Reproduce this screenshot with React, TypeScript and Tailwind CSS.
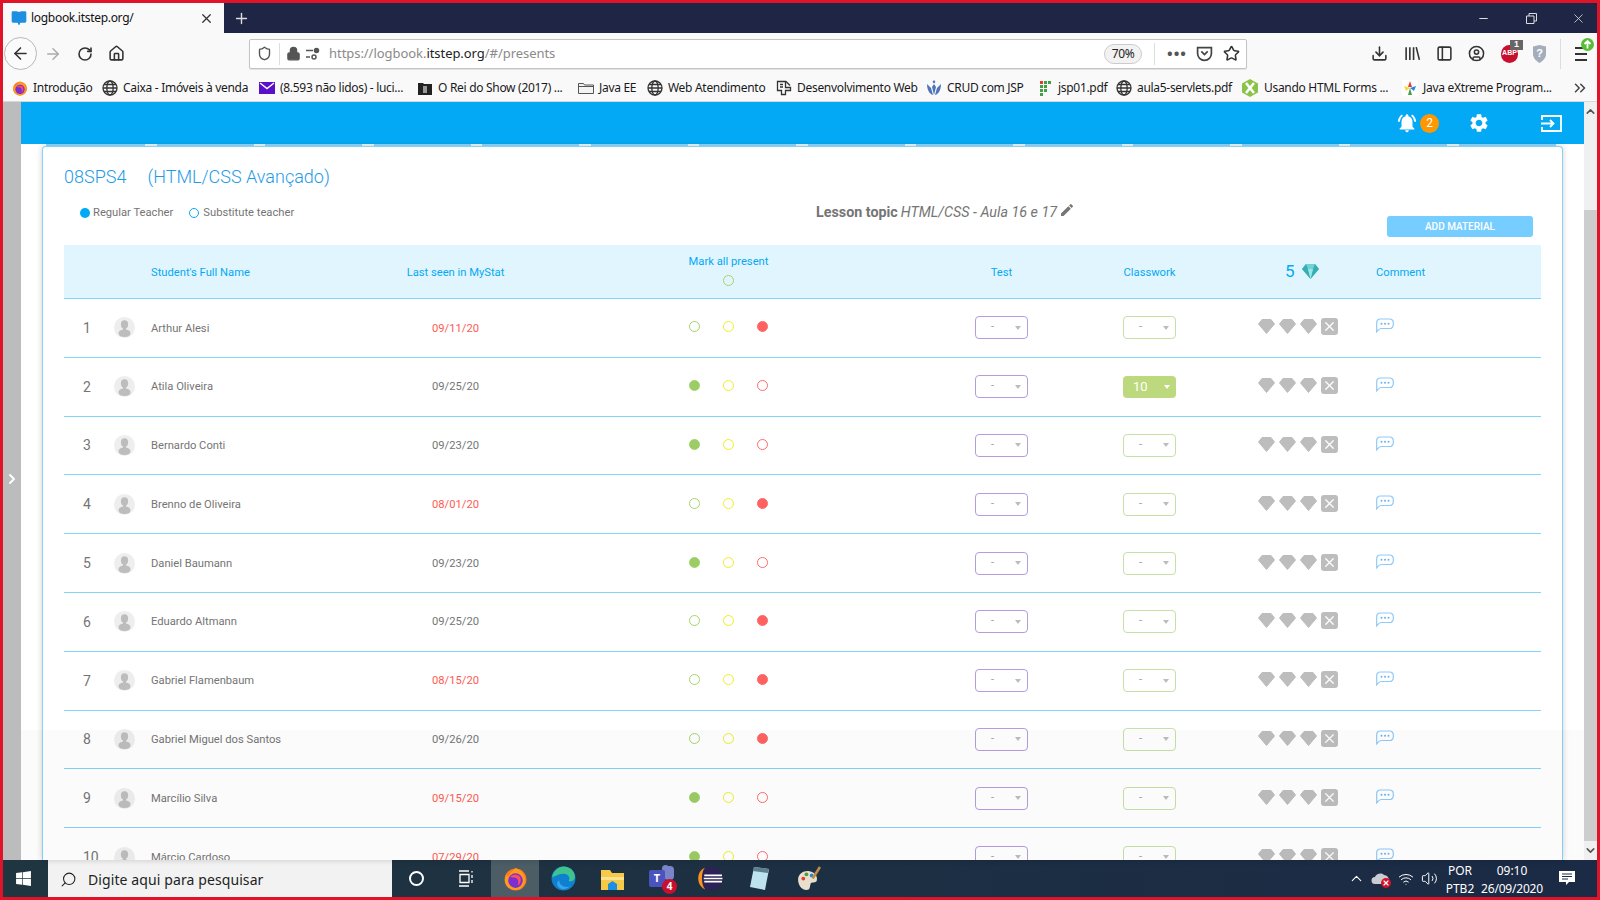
import { ArrowLeft, ArrowRight, BookOpen, ChevronDown, ChevronRight, ChevronUp, ChevronsRight, CircleUser, Download, Home, Lock, Minus, PanelLeft, Plus, RotateCw, Search, Shield, Star, Volume2, Wifi, X } from 'lucide-react'
import { MdEdit, MdNotificationsActive, MdSettings } from 'react-icons/md'
import { FaWindows } from 'react-icons/fa'

const grid = 'grid grid-cols-[46px_41px_230px_149px_397px_149px_147px_153px_1fr] items-center'

const students = [
  { name: 'Arthur Alesi', seen: '09/11/20', late: true, mark: 'red' },
  { name: 'Atila Oliveira', seen: '09/25/20', late: false, mark: 'green', classwork: '10' },
  { name: 'Bernardo Conti', seen: '09/23/20', late: false, mark: 'green' },
  { name: 'Brenno de Oliveira', seen: '08/01/20', late: true, mark: 'red' },
  { name: 'Daniel Baumann', seen: '09/23/20', late: false, mark: 'green' },
  { name: 'Eduardo Altmann', seen: '09/25/20', late: false, mark: 'red' },
  { name: 'Gabriel Flamenbaum', seen: '08/15/20', late: true, mark: 'red' },
  { name: 'Gabriel Miguel dos Santos', seen: '09/26/20', late: false, mark: 'red' },
  { name: 'Marcílio Silva', seen: '09/15/20', late: true, mark: 'green' },
  { name: 'Márcio Cardoso', seen: '07/29/20', late: true, mark: 'green' },
]

function FirefoxIcon({ size = 16 }: { size?: number }) {
  return (
    <svg width={size} height={size} viewBox="0 0 24 24">
      <circle cx="12" cy="13" r="10.500" fill="#ff7a1a" />
      <path d="M12 2c4 2 7 3 9 9 1 6-3 12-9 12S2 19 1.800 14c0-2 .7-4 1.700-6 .3 1.500.8 2 1.500 2.500C6 7 9 5 12 2z" fill="#ff9a1f" />
      <circle cx="12" cy="14" r="7" fill="#7b2fd0" />
      <path d="M7 10c3-2 7-2 9 0 2 3 1 7-2 9 2-4 0-8-3-8-2 0-3 0-4-1z" fill="#ff4f5e" />
    </svg>
  )
}

function Globe() {
  return (
    <svg width="16" height="16" viewBox="0 0 16 16" fill="none" stroke="#333" strokeWidth="1.300">
      <circle cx="8" cy="8" r="7" />
      <ellipse cx="8" cy="8" rx="3.200" ry="7" />
      <path d="M1 8h14M2 4.500h12M2 11.500h12" />
    </svg>
  )
}

function BookmarkIcon({ kind }: { kind: string }) {
  if (kind === 'firefox') return <FirefoxIcon />
  if (kind === 'globe') return <Globe />
  if (kind === 'mail')
    return (
      <svg width="16" height="16" viewBox="0 0 16 16">
        <rect x="0" y="2" width="16" height="12" fill="#5a0fc8" />
        <path d="M1 3l7 5.500L15 3" fill="none" stroke="#fff" strokeWidth="1.400" />
      </svg>
    )
  if (kind === 'film')
    return (
      <svg width="16" height="16" viewBox="0 0 16 16">
        <path d="M1 3h5l1 1h8v11H1z" fill="#222" />
        <rect x="6" y="6" width="4" height="7" fill="#999" />
      </svg>
    )
  if (kind === 'folder')
    return (
      <svg width="16" height="16" viewBox="0 0 16 16" fill="#f3f3f3" stroke="#555">
        <path d="M.5 3.500h5l1 1.500h9v8.500H.5z" />
        <path d="M.5 6.500h15" />
      </svg>
    )
  if (kind === 'doc')
    return (
      <svg width="16" height="16" viewBox="0 0 16 16" fill="none" stroke="#333" strokeWidth="1.300">
        <path d="M1.500 1.500h8v6h5v3h-5v4h-4v-4h-4z" />
        <path d="M4 4.500h3M4 7h3M10 1.500l4 4" />
      </svg>
    )
  if (kind === 'crud')
    return (
      <svg width="16" height="16" viewBox="0 0 16 16" fill="#4f74b8">
        <path d="M8 4l2 3-2 8-2-8zM1 4l4 4 2 7C3 14 1 9 1 4zM15 4l-4 4-2 7c4-1 6-6 6-11zM8 0l1.500 2L8 3.500 6.500 2z" />
      </svg>
    )
  if (kind === 'jsp')
    return (
      <svg width="16" height="16" viewBox="0 0 16 16" fill="#43a047">
        <rect x="3" y="1" width="3" height="3" fill="#e53935" />
        <rect x="7" y="1" width="3" height="3" />
        <rect x="11" y="1" width="3" height="3" />
        <rect x="3" y="5" width="3" height="3" />
        <rect x="7" y="5" width="3" height="3" />
        <rect x="3" y="9" width="3" height="3" />
        <rect x="7" y="9" width="3" height="3" />
        <rect x="3" y="13" width="3" height="3" />
      </svg>
    )
  if (kind === 'forms')
    return (
      <svg width="18" height="18" viewBox="0 0 18 18">
        <path d="M9 0l8 4.500v9L9 18l-8-4.500v-9z" fill="#8bc34a" />
        <path d="M5 4l8 10M13 4L5 14" stroke="#fff" strokeWidth="2.500" />
      </svg>
    )
  return (
    <svg width="16" height="16" viewBox="0 0 16 16">
      <rect width="16" height="16" fill="#fff" />
      <path d="M8 1l2 6H6z" fill="#e53935" />
      <path d="M2 6l6 2-4 3z" fill="#fdd835" />
      <path d="M14 6L8 8l4 3z" fill="#1e88e5" />
      <path d="M8 8l2 7H6z" fill="#43a047" />
    </svg>
  )
}

const bookmarks = [
  { icon: 'firefox', label: 'Introdução', text: 'w-[57px]' },
  { icon: 'globe', label: 'Caixa - Imóveis à venda', text: 'w-[124px]' },
  { icon: 'mail', label: '(8.593 não lidos) - luci...', text: 'w-[125px]' },
  { icon: 'film', label: 'O Rei do Show (2017) ...', text: 'w-[128px]' },
  { icon: 'folder', label: 'Java EE', text: 'w-[36px]' },
  { icon: 'globe', label: 'Web Atendimento', text: 'w-[96px]' },
  { icon: 'doc', label: 'Desenvolvimento Web', text: 'w-[117px]' },
  { icon: 'crud', label: 'CRUD com JSP', text: 'w-[78px]' },
  { icon: 'jsp', label: 'jsp01.pdf', text: 'w-[46px]' },
  { icon: 'globe', label: 'aula5-servlets.pdf', text: 'w-[92px]' },
  { icon: 'forms', label: 'Usando HTML Forms ...', text: 'w-[126px]' },
  { icon: 'star', label: 'Java eXtreme Program...', text: 'w-[127px]' },
]

function TabBar() {
  return (
    <div className="flex h-[30px] shrink-0 items-stretch bg-[#1f2544] text-white">
      <div className="flex w-[221px] items-center bg-[#f9f9fa] pl-[8px] pr-[10px] text-[#111]">
        <BookOpen className="h-[16px] w-[16px] fill-[#1d8fe0] text-[#1d8fe0]" />
        <span className="ml-[4px] flex-1 text-[12px] tracking-[-0.3px]">logbook.itstep.org/</span>
        <X className="h-[15px] w-[15px] text-[#333]" />
      </div>
      <Plus className="ml-[9px] h-[17px] w-[17px] self-center text-[#ddd]" />
      <div className="ml-auto flex items-center text-[#ddd]">
        <Minus className="mr-[36px] h-[13px] w-[13px]" />
        <svg className="mr-[34px]" width="11" height="11" viewBox="0 0 11 11" fill="none" stroke="#ddd">
          <path d="M.5 3h7.500v7.500H.5zM3 3V.5h7.500V8H8" />
        </svg>
        <X className="mr-[11px] h-[15px] w-[15px]" strokeWidth={1.300} />
      </div>
    </div>
  )
}

function Toolbar() {
  return (
    <div className="flex h-[37px] shrink-0 items-center bg-[#f9f9fa] pt-[4px] text-[#333]">
      <div className="ml-px flex h-[33px] w-[33px] items-center justify-center rounded-full border border-[#b8b8b8] bg-[#fbfbfb]">
        <ArrowLeft className="h-[19px] w-[19px]" />
      </div>
      <ArrowRight className="ml-[7px] h-[18px] w-[18px] text-[#aaa]" />
      <RotateCw className="ml-[15px] h-[16px] w-[16px]" strokeWidth={2.400} />
      <Home className="ml-[15px] h-[17px] w-[17px]" strokeWidth={2.200} />
      <div className="ml-[124px] flex h-[30px] w-[998px] items-center rounded-[2px] border border-[#c4c4c4] bg-white shadow-[0_1px_1px_rgba(0,0,0,0.1)]">
        <Shield className="ml-[7px] h-[15px] w-[15px] text-[#555]" strokeWidth={2.200} />
        <div className="ml-[7px] h-[22px] w-px bg-[#ddd]" />
        <Lock className="ml-[6px] h-[15px] w-[15px] fill-[#555] text-[#555]" />
        <svg className="ml-[5px]" width="14" height="14" viewBox="0 0 14 14" fill="none" stroke="#555" strokeWidth="1.500">
          <path d="M0 3.500h7M0 10h4" />
          <circle cx="10.500" cy="3.500" r="2" fill="#555" />
          <circle cx="8" cy="10" r="2" />
        </svg>
        <span className="ml-[9px] text-[13px] tracking-[-0.05px] text-[#8a8a8a]">
          https://logbook.<span className="text-[#222]">itstep.org</span>/#/presents
        </span>
        <span className="ml-auto flex h-[20px] w-[38px] items-center justify-center rounded-full border border-[#ccc] bg-[#f2f2f2] text-[12px] tracking-[-0.3px] text-[#222]">70%</span>
        <div className="ml-[12px] h-[22px] w-px bg-[#ddd]" />
        <span className="ml-[12px] text-[15px] font-bold leading-none tracking-[1px] text-[#555]">•••</span>
        <svg className="ml-[9px]" width="17" height="17" viewBox="0 0 16 16" fill="none" stroke="#444" strokeWidth="1.600">
          <path d="M1.500 2.500h13v5.500a6.500 6.500 0 0 1-13 0z" />
          <path d="M5 6l3 3 3-3" />
        </svg>
        <Star className="ml-[10px] mr-[6px] h-[17px] w-[17px]" strokeWidth={2.200} />
      </div>
      <Download className="ml-[124px] h-[17px] w-[17px]" strokeWidth={2.200} />
      <svg className="ml-[16px]" width="17" height="17" viewBox="0 0 16 16" fill="none" stroke="#333" strokeWidth="1.500">
        <path d="M2 2v12M5.500 2v12M9 2v12M11.500 2l3 12" />
      </svg>
      <PanelLeft className="ml-[15px] h-[17px] w-[17px]" strokeWidth={2.200} />
      <CircleUser className="ml-[15px] h-[17px] w-[17px]" strokeWidth={2.200} />
      <div className="relative ml-[16px] flex h-[18px] w-[17px] items-center justify-center rounded-full bg-[#c8102e]">
        <span className="font-['Liberation_Sans',sans-serif] text-[7px] font-bold text-white">ABP</span>
        <span className="absolute -right-[5px] -top-[5px] flex h-[10px] w-[13px] items-center justify-center bg-[#666] font-['Liberation_Sans',sans-serif] text-[9px] font-bold text-white">1</span>
      </div>
      <svg className="ml-[14px]" width="15" height="20" viewBox="0 0 15 20">
        <path d="M1 2.500L7.500 1 14 2.500V10c0 4-3 7-6.500 9C4 17 1 14 1 10z" fill="#a5adbb" />
        <text x="7.500" y="13" fontSize="11" fontWeight="700" fill="#fff" textAnchor="middle" fontFamily="Liberation Sans">?</text>
      </svg>
      <div className="ml-[13px] h-[30px] w-px bg-[#ddd]" />
      <div className="relative ml-[14px]">
        <div className="flex w-[12px] flex-col gap-[4px]">
          <div className="h-[2px] bg-[#333]" />
          <div className="h-[2px] bg-[#333]" />
          <div className="h-[2px] bg-[#333]" />
        </div>
        <svg className="absolute -right-[7px] -top-[9px]" width="13" height="13" viewBox="0 0 13 13">
          <circle cx="6.500" cy="6.500" r="6.500" fill="#57bd35" />
          <path d="M6.500 10.500V3M3.500 6l3-3 3 3" fill="none" stroke="#fff" strokeWidth="1.800" />
        </svg>
      </div>
    </div>
  )
}

function Bookmarks() {
  return (
    <div className="flex h-[32px] shrink-0 items-center border-b border-[#d8d8d8] bg-[#f9f9fa] pl-[9px] pt-[4px] text-[12px] text-[#1a1a1a]">
      <div className="flex items-center gap-[12px]">
        {bookmarks.map((b, i) => (
          <div key={i} className="flex items-center gap-[5px]">
            <BookmarkIcon kind={b.icon} />
            <span className={`${b.text} whitespace-nowrap tracking-[-0.3px]`}>{b.label}</span>
          </div>
        ))}
      </div>
      <ChevronsRight className="ml-[21px] h-[18px] w-[18px] text-[#444]" />
    </div>
  )
}

function Dot({ tone, filled }: { tone: 'green' | 'yellow' | 'red'; filled?: boolean }) {
  if (tone === 'green')
    return <span className={`h-[11px] w-[11px] rounded-full border border-[#a5d46a] ${filled ? 'bg-[#9ccc65]' : ''}`} />
  if (tone === 'yellow') return <span className="h-[11px] w-[11px] rounded-full border border-[#f0f020]" />
  return <span className={`h-[11px] w-[11px] rounded-full border border-[#ff6b6b] ${filled ? 'bg-[#ff6161]' : ''}`} />
}

function Caret({ light }: { light?: boolean }) {
  return <span className={`h-0 w-0 border-x-[3.500px] border-t-[4px] border-x-transparent ${light ? 'border-t-white' : 'border-t-[#bdbdbd]'}`} />
}

function Gem() {
  return (
    <svg width="17" height="15" viewBox="0 0 17 15" className="shrink-0">
      <path d="M4 .500h9l3.500 4.500-8 9.500-8-9.500z" fill="#bdbdbd" stroke="#bdbdbd" strokeLinejoin="round" />
    </svg>
  )
}

function Avatar() {
  return (
    <svg width="21" height="21" viewBox="0 0 21 21" className="ml-[4px]">
      <circle cx="10.500" cy="10.500" r="10.500" fill="#eeeeee" />
      <ellipse cx="10.500" cy="7.500" rx="3.600" ry="4.200" fill="#bdbdbd" />
      <path d="M9 11h3v1.500c2.500.8 4.500 1.600 4.500 3.500 0 2.500-2 4-6 4s-6-1.500-6-4c0-1.900 2-2.700 4.500-3.500z" fill="#bdbdbd" />
    </svg>
  )
}

function CommentIcon() {
  return (
    <svg width="18" height="15" viewBox="0 0 18 15" fill="none">
      <path d="M.700 13.800V4.500A3.500 3.500 0 0 1 4.200 1h9.600a3.500 3.500 0 0 1 3.500 3.500v2.500a3.500 3.500 0 0 1-3.500 3.500H5C3.200 10.500 2 12 .700 13.800z" stroke="#90caf9" strokeWidth="1.200" />
      <circle cx="5.500" cy="5.800" r="1" fill="#64b5f6" />
      <circle cx="9" cy="5.800" r="1" fill="#64b5f6" />
      <circle cx="12.500" cy="5.800" r="1" fill="#64b5f6" />
    </svg>
  )
}

function StudentRow({ index, student }: { index: number; student: (typeof students)[number] }) {
  return (
    <div className={`${grid} h-[58.800px] shrink-0 border-b border-[#81d4fa] text-[11.200px] text-[#757575]`}>
      <span className="pl-[19px] text-[14px] leading-none">{index}</span>
      <Avatar />
      <span className="pt-[2px]">{student.name}</span>
      <span className={`pt-[2px] text-center ${student.late ? 'text-[#ff5a52]' : ''}`}>{student.seen}</span>
      <div className="flex justify-center gap-[23px] pb-[2px]">
        <Dot tone="green" filled={student.mark === 'green'} />
        <Dot tone="yellow" />
        <Dot tone="red" filled={student.mark === 'red'} />
      </div>
      <div className="flex justify-center">
        <div className="flex h-[23px] w-[53px] items-center justify-between rounded-[4px] border border-[#b39ddb] pl-[15px] pr-[6px] text-[#9e9e9e]">
          <span>-</span>
          <Caret />
        </div>
      </div>
      <div className="flex justify-center">
        {student.classwork ? (
          <div className="flex h-[22px] w-[53px] items-center justify-between rounded-[4px] bg-[#bdd97e] pl-[10px] pr-[6px] text-[13px] text-white">
            <span>{student.classwork}</span>
            <Caret light />
          </div>
        ) : (
          <div className="flex h-[23px] w-[53px] items-center justify-between rounded-[4px] border border-[#c5e1a5] pl-[15px] pr-[6px] text-[#9e9e9e]">
            <span>-</span>
            <Caret />
          </div>
        )}
      </div>
      <div className="flex items-center gap-[4px] pb-[2px] pl-[35px]">
        <Gem />
        <Gem />
        <Gem />
        <div className="flex h-[17px] w-[17px] items-center justify-center rounded-[3px] bg-[#bdbdbd]">
          <X className="h-[15px] w-[15px] text-white" strokeWidth={2} />
        </div>
      </div>
      <div className="flex pb-[4px]">
        <CommentIcon />
      </div>
    </div>
  )
}

function Journal() {
  return (
    <div className="mx-[21px] flex min-h-0 flex-1 flex-col overflow-hidden rounded-t-[4px] border-x border-t border-[#81d4fa] bg-white px-[21px] shadow-[0_0_6px_rgba(0,0,0,0.18)]">
      <div className="flex h-[52px] shrink-0 items-end pb-[13px] text-[18px] font-light leading-none text-[#1e9be8]">
        <span>08SPS4</span>
        <span className="ml-[21px]">(HTML/CSS Avançado)</span>
      </div>
      <div className="flex h-[46px] shrink-0 items-start text-[#757575]">
        <div className="flex w-[752px] items-center pl-[16px] pt-[6px] text-[11.200px]">
          <span className="h-[10px] w-[10px] rounded-full bg-[#03a9f4]" />
          <span className="ml-[3px]">Regular Teacher</span>
          <span className="ml-[16px] h-[10px] w-[10px] rounded-full border border-[#03a9f4]" />
          <span className="ml-[4px]">Substitute teacher</span>
        </div>
        <div className="flex w-[571px] items-center pt-[3px] text-[14.300px]">
          <span className="font-bold">Lesson topic</span>
          <span className="ml-[3px] italic">HTML/CSS - Aula 16 e 17</span>
          <MdEdit className="mb-[5px] ml-[2px] h-[16px] w-[16px]" />
        </div>
        <button className="mt-[17px] h-[21px] w-[146px] rounded-[3px] bg-[#76cdff] text-[10px] font-medium text-white">ADD MATERIAL</button>
      </div>
      <div className={`${grid} h-[54px] shrink-0 border-b border-[#81d4fa] bg-[#e1f5fe] text-[11.200px] text-[#03a9f4]`}>
        <span />
        <span />
        <span className="pt-[3px]">Student's Full Name</span>
        <span className="pt-[3px] text-center">Last seen in MyStat</span>
        <div className="flex flex-col items-center gap-[5px] pb-[3px]">
          <span>Mark all present</span>
          <Dot tone="green" />
        </div>
        <span className="pt-[3px] text-center">Test</span>
        <span className="pt-[3px] text-center">Classwork</span>
        <div className="flex items-center pl-[62px]">
          <span className="text-[17px] leading-none">5</span>
          <svg className="ml-[7px]" width="17" height="15" viewBox="0 0 17 15">
            <path d="M4 0h9l4 5-8.500 10L0 5z" fill="#6fd3d3" />
            <path d="M4 0l2 5 2.500 10L0 5zM13 0l-2 5-2.500 10L17 5z" fill="#37aeb4" />
            <path d="M6 5h5L8.500 15z" fill="#9be6e6" />
          </svg>
        </div>
        <span className="pt-[3px]">Comment</span>
      </div>
      {students.map((s, i) => (
        <StudentRow key={s.name} index={i + 1} student={s} />
      ))}
    </div>
  )
}

function Page() {
  return (
    <div className="relative flex min-h-0 flex-1 font-['Roboto',sans-serif]">
      <div className="flex w-[18px] shrink-0 items-center justify-center bg-[#bcbcbc] pb-[4px]">
        <ChevronRight className="h-[16px] w-[16px] text-white" strokeWidth={3} />
      </div>
      <div className="flex min-w-0 flex-1 flex-col bg-white">
        <div className="flex h-[42px] shrink-0 items-center bg-[#04a9f5] text-white">
          <MdNotificationsActive className="ml-[1375px] h-[22px] w-[22px]" />
          <span className="ml-[2px] flex h-[19px] w-[19px] items-center justify-center rounded-full bg-[#ff9800] text-[12px]">2</span>
          <MdSettings className="ml-[29px] h-[22px] w-[22px]" />
          <svg className="ml-[51px]" width="21" height="17" viewBox="0 0 21 17" fill="none" stroke="#fff" strokeWidth="1.800">
            <path d="M1 5V1h19v15H1v-4" />
            <path d="M0 8.500h12M9 5l3.500 3.500L9 12" />
          </svg>
        </div>
        <div className="ml-[25px] mr-[27px] flex h-[2px] shrink-0 gap-[97px] overflow-hidden bg-[#90d8ff] pl-[99px]">
          {Array.from({ length: 14 }).map((_, i) => (
            <span key={i} className="h-[2px] w-[11.500px] shrink-0 bg-[#eef9ff]" />
          ))}
        </div>
        <Journal />
      </div>
      <div className="flex w-[13px] shrink-0 flex-col items-center justify-between bg-[#f0f0f0]">
        <ChevronUp className="mt-[3px] h-[13px] w-[13px] text-[#555]" strokeWidth={3} />
        <div className="mb-[3px] mt-[92px] w-full flex-1 bg-[#cdcdcd]" />
        <ChevronDown className="mb-[3px] h-[13px] w-[13px] text-[#555]" strokeWidth={3} />
      </div>
      <div className="pointer-events-none absolute bottom-0 left-[18px] right-[13px] h-[130px] bg-black/[0.015]" />
    </div>
  )
}

function Taskbar() {
  return (
    <div className="flex h-[37px] shrink-0 items-stretch bg-gradient-to-r from-[#1f3540] to-[#1b2a45] text-white">
      <div className="flex w-[45px] items-center justify-center pr-[4px]">
        <FaWindows className="h-[17px] w-[17px]" />
      </div>
      <div className="flex w-[344px] items-center bg-[#f2f2f2] pl-[12px] pt-px text-[14px] text-[#222]">
        <Search className="h-[17px] w-[17px] -scale-x-100" strokeWidth={1.500} />
        <span className="ml-[11px] tracking-[0.1px]">Digite aqui para pesquisar</span>
      </div>
      <div className="flex w-[48px] items-center justify-center pl-[1px]">
        <span className="h-[15px] w-[15px] rounded-full border-[2.500px] border-white" />
      </div>
      <div className="flex w-[51px] items-center justify-center">
        <svg width="17" height="17" viewBox="0 0 17 17" fill="none" stroke="#fff" strokeWidth="1.300">
          <path d="M2 1h10M2 16h10M3 4.500h9v8H3zM15 1v1.500M15 5v3M15 10v3" />
        </svg>
      </div>
      <div className="flex w-[48px] items-center justify-center bg-[#4c5d66]">
        <FirefoxIcon size={25} />
      </div>
      <div className="flex w-[49px] items-center justify-center">
        <svg width="25" height="25" viewBox="0 0 24 24">
          <circle cx="12" cy="12" r="11.500" fill="#0f7fd0" />
          <path d="M1 11C2 5 7 .500 12 .500c6 0 11 4 11 10 0 3-3 5-6 4 2-4-1-7-5-7-5 0-9 3-11 3.500z" fill="#3ec28f" />
          <path d="M8 14c0 4 4 7 9 6l2-1c-3 3-9 5-12 1-2-2-1-6 1-6z" fill="#37a5e8" />
        </svg>
      </div>
      <div className="flex w-[49px] items-center justify-center">
        <svg width="23" height="22" viewBox="0 0 23 22">
          <path d="M0 2h9l2 3h12v17H0z" fill="#f7c948" />
          <rect x="0" y="9" width="23" height="3" fill="#fbe38e" />
          <path d="M7 22v-6l4.500-3 4.500 3v6z" fill="#1d8fe0" />
        </svg>
      </div>
      <div className="flex w-[49px] items-center justify-center">
        <div className="relative flex h-[25px] w-[25px] items-center justify-center">
          <span className="absolute right-0 top-0 h-[14px] w-[10px] rounded-[4px] bg-[#7b83c9]" />
          <span className="absolute right-[5px] top-[-1px] h-[7px] w-[7px] rounded-full bg-[#7b83c9]" />
          <span className="absolute left-0 top-[4px] flex h-[17px] w-[16px] items-center justify-center rounded-[2px] bg-[#4b53bc] text-[11px] font-bold">T</span>
          <span className="absolute -bottom-[3px] -right-[3px] flex h-[15px] w-[15px] items-center justify-center rounded-full bg-[#c8102e] text-[10px] font-bold">4</span>
        </div>
      </div>
      <div className="flex w-[49px] items-center justify-center">
        <svg width="25" height="25" viewBox="0 0 24 24">
          <circle cx="12" cy="12" r="11.500" fill="#2c2255" />
          <path d="M7 1.500a11.500 11.500 0 0 0 0 21C3 19 2.500 5 7 1.500z" fill="#f7941e" />
          <path d="M6 9h17M5.500 12h18M6 15h17" stroke="#fff" strokeWidth="1.500" />
        </svg>
      </div>
      <div className="flex w-[49px] items-center justify-center">
        <svg width="23" height="25" viewBox="0 0 23 25">
          <path d="M6 1l15 2-4 21-15-3z" fill="#bfe3ee" />
          <path d="M6 1l15 2-1 4-15-2z" fill="#5b7f8c" />
        </svg>
      </div>
      <div className="flex w-[49px] items-center justify-center">
        <svg width="25" height="25" viewBox="0 0 24 24">
          <path d="M2 13c0-6 6-9 11-8 5 1 8 5 7 9-1 3-5 1-6 3-1 3 0 6-4 6-5 0-8-5-8-10z" fill="#e8e0cc" />
          <circle cx="7" cy="12" r="1.800" fill="#e53935" />
          <circle cx="10" cy="8" r="1.800" fill="#43a047" />
          <circle cx="15" cy="9" r="1.800" fill="#1e88e5" />
          <path d="M23 1l-7 11" stroke="#c58b46" strokeWidth="2.500" />
        </svg>
      </div>
      <div className="ml-auto flex items-center text-[12px]">
        <ChevronUp className="h-[17px] w-[17px]" strokeWidth={1.500} />
        <div className="relative ml-[6px] flex">
          <svg width="19" height="13" viewBox="0 0 19 13">
            <path d="M4 12a3.500 3.500 0 0 1 0-7c1-3 6-5 9-2 3 0 5 3 5 5s-2 4-4 4z" fill="#c8ccd3" />
          </svg>
          <span className="absolute -bottom-[3px] -right-[1px] flex h-[10px] w-[10px] items-center justify-center rounded-full bg-[#d3122a]">
            <X className="h-[8px] w-[8px]" strokeWidth={3.500} />
          </span>
        </div>
        <Wifi className="ml-[8px] h-[16px] w-[16px]" strokeWidth={1.500} />
        <Volume2 className="ml-[7px] h-[17px] w-[17px]" strokeWidth={1.400} />
        <div className="ml-[7px] flex w-[30px] flex-col items-center pt-[2px] leading-[18px]">
          <span>POR</span>
          <span>PTB2</span>
        </div>
        <div className="ml-[4px] flex w-[66px] flex-col items-center pt-[2px] leading-[18px]">
          <span>09:10</span>
          <span className="whitespace-nowrap tracking-[-0.2px]">26/09/2020</span>
        </div>
        <svg className="ml-[14px] mr-[21px]" width="17" height="17" viewBox="0 0 17 17">
          <path d="M0 1h16v11h-6l-3 3v-3H0z" fill="#fff" />
          <path d="M3 4h10M3 6.500h10M3 9h6" stroke="#1b2a45" strokeWidth="1" />
        </svg>
      </div>
    </div>
  )
}

export default function App() {
  return (
    <div className="flex h-screen w-screen flex-col overflow-hidden border-[3px] border-[#df1429] font-['Noto_Sans',sans-serif]">
      <TabBar />
      <Toolbar />
      <Bookmarks />
      <Page />
      <Taskbar />
    </div>
  )
}
